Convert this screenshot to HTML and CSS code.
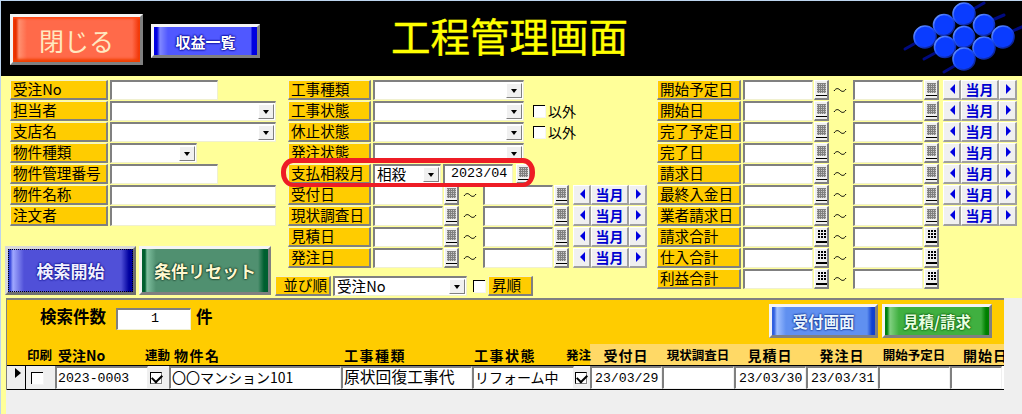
FILE: index.html
```html
<!DOCTYPE html>
<html lang="ja">
  <head>
    <meta charset="UTF-8" />
    <title>工程管理画面</title>
    <link rel="stylesheet" href="styles.css">
  </head>

  <body>
    <svg class="defs" width="0" height="0">
      <defs>
        <linearGradient id="rim" x1="0.15" y1="0.1" x2="0.85" y2="0.9">
          <stop offset="0" stop-color="#5f8cff" />
          <stop offset="0.5" stop-color="#1a4cf5" />
          <stop offset="1" stop-color="#0a1f90" />
        </linearGradient>
        <symbol id="cal" viewBox="0 0 11 15">
          <path d="M1 1h9v10H1z" fill="#c8c8c8" />
          <path d="M1 1.5h9M1 3.5h9M1 5.5h9M1 7.5h9M1 9.5h9M2.5 1v10M4.5 1v10M6.5 1v10M8.5 1v10" stroke="#808080" stroke-width="1" />
          <path d="M0 13.5h11" stroke="#000" stroke-width="1" />
        </symbol>
        <symbol id="calc" viewBox="0 0 11 15">
          <path d="M2 1h2v2H2zM5 1h2v2H5zM8 1h2v2H8zM2 4h2v2H2zM5 4h2v2H5zM8 4h2v2H8zM2 7h2v2H2zM5 7h2v2H5zM8 7h2v2H8z" fill="#000" />
          <path d="M0 12h11v2H0z" fill="#000" />
        </symbol>
        <symbol id="wave" viewBox="0 0 14 6">
          <path d="M1 4 C3 1 5 1 7 3 S11 5 13 2" fill="none" stroke="#000" stroke-width="1" />
        </symbol>
      </defs>
    </svg>

    <header class="top-bar">
      <button class="img-btn btn-close">閉じる</button>
      <button class="img-btn btn-profit">収益一覧</button>
      <h1 class="title">工程管理画面</h1>
      <svg class="logo" width="122" height="75" viewBox="0 0 122 75">
        <g stroke="#000a80" stroke-width="3" stroke-linecap="round">
          <path d="M5 48 L30 34 M24 58 L50 44 M44 71 L70 56" />
          <path d="M70 10 L84 2 M90 20 L104 14 M108 32 L124 25" />
        </g>
        <g fill="#0a3cff" stroke="url(#rim)" stroke-width="1.6">
          <circle cx="44" cy="24" r="10.5" />
          <circle cx="84" cy="24" r="10.5" />
          <circle cx="64" cy="13" r="11" />
          <circle cx="25" cy="36" r="11" />
          <circle cx="64" cy="36" r="10.5" />
          <circle cx="103" cy="36" r="11" />
          <circle cx="45" cy="46" r="10.5" />
          <circle cx="84" cy="47" r="11" />
          <circle cx="64" cy="58" r="11" />
        </g>
      </svg>
    </header>

    <section class="search">
      <div class="col col-left">
        <div class="row"><span class="lbl">受注No</span><span class="inp w108"></span></div>
        <div class="row"><span class="lbl">担当者</span><span class="inp w166"><i class="drop"></i></span></div>
        <div class="row"><span class="lbl">支店名</span><span class="inp w166"><i class="drop"></i></span></div>
        <div class="row"><span class="lbl">物件種類</span><span class="inp w87"><i class="drop"></i></span></div>
        <div class="row"><span class="lbl">物件管理番号</span><span class="inp w108"></span></div>
        <div class="row"><span class="lbl">物件名称</span><span class="inp w166"></span></div>
        <div class="row"><span class="lbl">注文者</span><span class="inp w166"></span></div>
        <div class="search-btns">
          <button class="img-btn btn-search">検索開始</button>
          <button class="img-btn btn-reset">条件リセット</button>
        </div>
      </div>

      <div class="col col-mid">
        <div class="row"><span class="lbl">工事種類</span><span class="inp w151"><i class="drop"></i></span></div>
        <div class="row"><span class="lbl">工事状態</span><span class="inp w151"><i class="drop"></i></span><i class="chk"></i><span class="txt">以外</span></div>
        <div class="row"><span class="lbl">休止状態</span><span class="inp w151"><i class="drop"></i></span><i class="chk"></i><span class="txt">以外</span></div>
        <div class="row"><span class="lbl">発注状態</span><span class="inp w151"><i class="drop"></i></span></div>
        <div class="row"><span class="lbl">支払相殺月</span><span class="inp w68">相殺<i class="drop"></i></span><span class="inp w70 val">2023/04</span><span class="cal cal-gap"><svg width="11" height="15"><use href="#cal" /></svg></span></div>
        <div class="row"><span class="lbl">受付日</span><span class="inp w70"></span><span class="cal"><svg width="11" height="15"><use href="#cal" /></svg></span><svg class="wave" width="14" height="6"><use href="#wave" /></svg><span class="inp w70"></span><span class="cal"><svg width="11" height="15"><use href="#cal" /></svg></span><span class="nav"><b class="prev"></b><em>当月</em><b class="next"></b></span></div>
        <div class="row"><span class="lbl">現状調査日</span><span class="inp w70"></span><span class="cal"><svg width="11" height="15"><use href="#cal" /></svg></span><svg class="wave" width="14" height="6"><use href="#wave" /></svg><span class="inp w70"></span><span class="cal"><svg width="11" height="15"><use href="#cal" /></svg></span><span class="nav"><b class="prev"></b><em>当月</em><b class="next"></b></span></div>
        <div class="row"><span class="lbl">見積日</span><span class="inp w70"></span><span class="cal"><svg width="11" height="15"><use href="#cal" /></svg></span><svg class="wave" width="14" height="6"><use href="#wave" /></svg><span class="inp w70"></span><span class="cal"><svg width="11" height="15"><use href="#cal" /></svg></span><span class="nav"><b class="prev"></b><em>当月</em><b class="next"></b></span></div>
        <div class="row"><span class="lbl">発注日</span><span class="inp w70"></span><span class="cal"><svg width="11" height="15"><use href="#cal" /></svg></span><svg class="wave" width="14" height="6"><use href="#wave" /></svg><span class="inp w70"></span><span class="cal"><svg width="11" height="15"><use href="#cal" /></svg></span><span class="nav"><b class="prev"></b><em>当月</em><b class="next"></b></span></div>
        <div class="row row-sort">
          <span class="lbl lbl-sort">並び順</span><span class="inp w134">受注No<i class="drop"></i></span><i class="chk"></i><span class="lbl lbl-asc">昇順</span>
        </div>
        <div class="highlight"></div>
      </div>

      <div class="col col-right">
        <div class="row"><span class="lbl">開始予定日</span><span class="inp w70"></span><span class="cal"><svg width="11" height="15"><use href="#cal" /></svg></span><svg class="wave" width="14" height="6"><use href="#wave" /></svg><span class="inp w70"></span><span class="cal"><svg width="11" height="15"><use href="#cal" /></svg></span><span class="nav"><b class="prev"></b><em>当月</em><b class="next"></b></span></div>
        <div class="row"><span class="lbl">開始日</span><span class="inp w70"></span><span class="cal"><svg width="11" height="15"><use href="#cal" /></svg></span><svg class="wave" width="14" height="6"><use href="#wave" /></svg><span class="inp w70"></span><span class="cal"><svg width="11" height="15"><use href="#cal" /></svg></span><span class="nav"><b class="prev"></b><em>当月</em><b class="next"></b></span></div>
        <div class="row"><span class="lbl">完了予定日</span><span class="inp w70"></span><span class="cal"><svg width="11" height="15"><use href="#cal" /></svg></span><svg class="wave" width="14" height="6"><use href="#wave" /></svg><span class="inp w70"></span><span class="cal"><svg width="11" height="15"><use href="#cal" /></svg></span><span class="nav"><b class="prev"></b><em>当月</em><b class="next"></b></span></div>
        <div class="row"><span class="lbl">完了日</span><span class="inp w70"></span><span class="cal"><svg width="11" height="15"><use href="#cal" /></svg></span><svg class="wave" width="14" height="6"><use href="#wave" /></svg><span class="inp w70"></span><span class="cal"><svg width="11" height="15"><use href="#cal" /></svg></span><span class="nav"><b class="prev"></b><em>当月</em><b class="next"></b></span></div>
        <div class="row"><span class="lbl">請求日</span><span class="inp w70"></span><span class="cal"><svg width="11" height="15"><use href="#cal" /></svg></span><svg class="wave" width="14" height="6"><use href="#wave" /></svg><span class="inp w70"></span><span class="cal"><svg width="11" height="15"><use href="#cal" /></svg></span><span class="nav"><b class="prev"></b><em>当月</em><b class="next"></b></span></div>
        <div class="row"><span class="lbl">最終入金日</span><span class="inp w70"></span><span class="cal"><svg width="11" height="15"><use href="#cal" /></svg></span><svg class="wave" width="14" height="6"><use href="#wave" /></svg><span class="inp w70"></span><span class="cal"><svg width="11" height="15"><use href="#cal" /></svg></span><span class="nav"><b class="prev"></b><em>当月</em><b class="next"></b></span></div>
        <div class="row"><span class="lbl">業者請求日</span><span class="inp w70"></span><span class="cal"><svg width="11" height="15"><use href="#cal" /></svg></span><svg class="wave" width="14" height="6"><use href="#wave" /></svg><span class="inp w70"></span><span class="cal"><svg width="11" height="15"><use href="#cal" /></svg></span><span class="nav"><b class="prev"></b><em>当月</em><b class="next"></b></span></div>
        <div class="row"><span class="lbl">請求合計</span><span class="inp w70"></span><span class="cal"><svg width="11" height="15"><use href="#calc" /></svg></span><svg class="wave" width="14" height="6"><use href="#wave" /></svg><span class="inp w70"></span><span class="cal"><svg width="11" height="15"><use href="#calc" /></svg></span></div>
        <div class="row"><span class="lbl">仕入合計</span><span class="inp w70"></span><span class="cal"><svg width="11" height="15"><use href="#calc" /></svg></span><svg class="wave" width="14" height="6"><use href="#wave" /></svg><span class="inp w70"></span><span class="cal"><svg width="11" height="15"><use href="#calc" /></svg></span></div>
        <div class="row"><span class="lbl">利益合計</span><span class="inp w70"></span><span class="cal"><svg width="11" height="15"><use href="#calc" /></svg></span><svg class="wave" width="14" height="6"><use href="#wave" /></svg><span class="inp w70"></span><span class="cal"><svg width="11" height="15"><use href="#calc" /></svg></span></div>
      </div>
    </section>

    <section class="results">
      <div class="results-main">
        <div class="summary">
          <span class="count-lbl">検索件数</span><span class="inp count">1</span><span class="count-lbl">件</span>
          <span class="summary-btns">
            <button class="img-btn btn-recv">受付画面</button>
            <button class="img-btn btn-quote">見積/請求</button>
          </span>
        </div>

        <div class="list-head">
          <span class="h h-print">印刷</span>
          <span class="h h-no">受注No</span>
          <span class="h h-link">連動</span>
          <span class="h h-name">物件名</span>
          <span class="h h-type">工事種類</span>
          <span class="h h-state">工事状態</span>
          <span class="h h-order">発注</span>
          <div class="head-light">
            <span class="h hd hd-big">受付日</span>
            <span class="h hd">現状調査日</span>
            <span class="h hd hd-big">見積日</span>
            <span class="h hd hd-big">発注日</span>
            <span class="h hd">開始予定日</span>
            <span class="h hd hd-last hd-big">開始日</span>
          </div>
        </div>

        <div class="list-row">
          <span class="selector"></span>
          <span class="cell-chk"><i class="chk"></i></span>
          <span class="cell c-no">2023-0003</span>
          <span class="cell-chk c-link"><i class="chk on"></i></span>
          <span class="cell c-name">〇〇マンション101</span>
          <span class="cell c-type">原状回復工事代</span>
          <span class="cell c-state">リフォーム中</span>
          <span class="cell-chk c-order"><i class="chk on"></i></span>
          <span class="cell c-date">23/03/29</span>
          <span class="cell c-date"></span>
          <span class="cell c-date">23/03/30</span>
          <span class="cell c-date">23/03/31</span>
          <span class="cell c-date"></span>
          <span class="cell c-end"></span>
        </div>
      </div>
    </section>
  </body>
</html>
```

FILE: styles.css
```css
* {
  box-sizing: border-box;
}

html,
body {
  height: 100%;
}

body {
  margin: 0;
  padding: 1px 0 0 1px;
  background-color: #bcd4ee;
  font-family: "Noto Sans CJK JP", "Liberation Sans", sans-serif;
  color: #000;
  overflow: hidden;
  display: flex;
  flex-direction: column;
}

.defs {
  position: absolute;
}

/* header */
.top-bar {
  height: 75px;
  background-color: #000;
  display: flex;
  align-items: flex-start;
  flex-shrink: 0;
  overflow: hidden;
}

.title {
  margin: 9px 0 0 131px;
  font-size: 39.5px;
  line-height: 50px;
  font-weight: 400;
  color: #ffff00;
  -webkit-text-stroke: 0.4px #ffff00;
  white-space: nowrap;
}

.logo {
  margin-left: auto;
  flex-shrink: 0;
}

.img-btn {
  font-family: inherit;
  padding: 0;
  cursor: pointer;
  border: 3px solid;
  border-color: #f4f4f4 #808080 #808080 #f4f4f4;
}

.btn-close {
  margin: 13px 0 0 9px;
  width: 133px;
  height: 51px;
  background: linear-gradient(90deg, #e83000 0 3px, #ff9070 6px, #ff6a4a 14px, #ff6a4a calc(100% - 8px), #f03000 100%);
  box-shadow: inset 0 2px 2px #ff4a18, inset 0 -3px 3px #f04000;
  color: #ffe8c0;
  font-size: 25px;
}

.btn-profit {
  margin: 23px 0 0 8px;
  width: 109px;
  height: 34px;
  background: linear-gradient(90deg, #0000e0 0 3px, #8088ff 6px, #5058ff 14px, #5058ff calc(100% - 6px), #0000e0 calc(100% - 5px));
  color: #fff;
  font-size: 15px;
  font-weight: 700;
  text-shadow: 0 0 2px #000090, 0 0 2px #000090, 0 0 2px #000090;
}

/* search form */
.search {
  height: 222px;
  background-color: #ffff99;
  display: flex;
  flex-shrink: 0;
  padding: 4px 0 0 9px;
}

.col {
  display: flex;
  flex-direction: column;
  gap: 1px;
}

.col-left {
  width: 278px;
}

.col-mid {
  width: 369px;
  position: relative;
}

.row {
  display: flex;
  align-items: center;
  height: 20px;
}

.lbl {
  height: 20px;
  width: 98px;
  margin-right: 2px;
  padding-left: 2px;
  flex-shrink: 0;
  background-color: #ffcc00;
  border: 2px solid;
  border-color: #f4f4c8 #808080 #808080 #f4f4c8;
  border-width: 1px 2px 2px 1px;
  font-size: 14.6px;
  line-height: 16px;
  white-space: nowrap;
}

.col-mid .lbl {
  width: 83px;
}

.col-right .lbl {
  width: 84px;
  margin-right: 2px;
}

.inp {
  position: relative;
  display: block;
  height: 20px;
  flex-shrink: 0;
  background-color: #fff;
  border: 2px solid;
  border-color: #808080 #f0f0d0 #f0f0d0 #808080;
  border-width: 2px 1px 1px 2px;
  font-size: 14.6px;
  line-height: 15px;
  padding-left: 2px;
  white-space: nowrap;
}

.w68 { width: 68px; }
.w70 { width: 70px; }
.w87 { width: 87px; }
.w108 { width: 108px; }
.w134 { width: 134px; }
.w151 { width: 151px; }
.w166 { width: 166px; }

.val {
  margin-left: 2px;
  padding-left: 6px;
  font-family: "Liberation Mono", monospace;
  font-size: 13.4px;
  line-height: 16px;
}

.drop {
  position: absolute;
  right: 1px;
  top: 1px;
  width: 16px;
  height: 15px;
  background-color: #f0f0f0;
  border: 1px solid;
  border-color: #fff #808080 #808080 #fff;
}

.drop::after {
  content: "";
  position: absolute;
  left: 4px;
  top: 5px;
  border: 3px solid transparent;
  border-top: 4px solid #000;
  border-bottom: 0;
}

.chk {
  display: block;
  position: relative;
  width: 12px;
  height: 12px;
  flex-shrink: 0;
  background-color: #fff;
  border-left: 1px solid #000;
  border-top: 1px solid #000;
  box-shadow: 1px 1px 0 #f4f4f4;
}

.chk.on {
  border: 1px solid #808080;
  border-left-color: #000;
  border-top-color: #000;
}

.chk.on::after {
  content: "";
  position: absolute;
  left: 1px;
  top: 1px;
  width: 8px;
  height: 5px;
  border-left: 2px solid #000;
  border-bottom: 2px solid #000;
  transform: rotate(-45deg);
}

.col-mid > .row > .chk {
  margin-left: 9px;
}

.txt {
  margin-left: 3px;
  font-size: 14px;
}

.cal {
  width: 15px;
  height: 20px;
  margin-left: 1px;
  flex-shrink: 0;
  background-color: #f0f0f0;
  border: 1px solid;
  border-color: #fff #808080 #808080 #fff;
  border-width: 1px 2px 2px 1px;
  padding-top: 1px;
  display: flex;
  justify-content: center;
}

.cal-gap {
  margin-left: 3px;
}

.wave {
  margin: 0 6px 0 4px;
  flex-shrink: 0;
}

.nav {
  display: flex;
  height: 20px;
  margin-left: 4px;
  flex-shrink: 0;
}

.nav b,
.nav em {
  display: block;
  position: relative;
  height: 20px;
  background-color: #f0f0f0;
  border: 1px solid;
  border-color: #fff #a0a0a0 #a0a0a0 #fff;
  border-width: 1px 2px 2px 1px;
  color: #0000d0;
  font-style: normal;
  text-align: center;
}

.nav b {
  width: 18px;
}

.nav b::after {
  content: "";
  position: absolute;
  left: 6px;
  top: 3px;
  border: 5px solid transparent;
  border-left: 0;
  border-right: 5px solid #0000e0;
}

.nav b.next::after {
  border-left: 5px solid #0000e0;
  border-right: 0;
}

.nav em {
  width: 38px;
  font-size: 14px;
  line-height: 16px;
  font-weight: 700;
}

.row-sort {
  margin: 7px 0 0 -13px;
}

.lbl.lbl-sort {
  width: 56px;
  margin-right: 2px;
  text-align: right;
  padding: 0 2px 0 0;
}

.col-mid > .row-sort > .chk {
  margin-left: 6px;
}

.lbl.lbl-asc {
  width: 45px;
  margin: 0 0 0 3px;
  padding-left: 3px;
}

.highlight {
  position: absolute;
  left: -7px;
  top: 78px;
  width: 254px;
  height: 29px;
  border: 5px solid #ee1c25;
  border-width: 5px 5px 4px 5px;
  border-radius: 12px / 14px;
}

.search-btns {
  display: flex;
  gap: 3px;
  margin: 19px 0 0 -5px;
}

.btn-search {
  width: 131px;
  height: 49px;
  background: linear-gradient(90deg, #3040d8 0 2px, #a0a8ff 5px, #5050d8 16px, #5050d8 calc(100% - 12px), #0000a0 calc(100% - 4px));
  border-color: #d8d8d8 #707070 #707070 #d8d8d8;
  color: #f0f0ff;
  font-size: 17px;
  font-weight: 700;
  outline: 1px dotted #000;
  outline-offset: -4px;
  text-shadow: 0 0 2px #000080, 0 0 2px #000080;
}

.btn-reset {
  width: 132px;
  height: 49px;
  background: linear-gradient(90deg, #006030 0 3px, #80c0a0 5px, #509070 14px, #509070 calc(100% - 10px), #006030 calc(100% - 4px));
  color: #fff8d0;
  font-size: 17px;
  font-weight: 700;
  text-shadow: 0 0 2px #002010, 0 0 2px #002010;
}

/* results list */
.results {
  flex: 1;
  background: linear-gradient(90deg, #ffff99 0 5px, #efefef 5px);
  padding-left: 5px;
  min-height: 0;
}

.results-main {
  width: 998px;
  border-top: 2px solid #808080;
  border-left: 1px solid #808080;
}

.summary {
  height: 45px;
  background-color: #ffcc00;
  display: flex;
  align-items: flex-start;
}

.count-lbl {
  font-size: 16.5px;
  font-weight: 700;
  line-height: 20px;
  margin: 6px 0 0 33px;
}

.count-lbl + .inp + .count-lbl {
  margin-left: 5px;
}

.inp.count {
  width: 75px;
  height: 22px;
  margin: 8px 0 0 10px;
  text-align: center;
  font-family: "Liberation Mono", monospace;
  font-size: 13.4px;
  line-height: 18px;
}

.summary-btns {
  display: flex;
  gap: 4px;
  margin: 4px 0 0 auto;
  padding-right: 12px;
}

.btn-recv {
  width: 109px;
  height: 34px;
  background: linear-gradient(90deg, #3060e0 0 2px, #a0c0ff 5px, #6090f0 14px, #6090f0 calc(100% - 8px), #1040d0 calc(100% - 3px));
  color: #e8f4ff;
  font-size: 15.5px;
  font-weight: 700;
  text-shadow: 0 0 2px #002080, 0 0 2px #002080;
}

.btn-quote {
  width: 110px;
  height: 34px;
  background: linear-gradient(90deg, #008010 0 2px, #80d080 5px, #40b040 14px, #40b040 calc(100% - 8px), #008000 calc(100% - 3px));
  color: #e8ffe0;
  font-size: 15.5px;
  font-weight: 700;
  text-shadow: 0 0 2px #005000, 0 0 2px #005000;
}

.list-head {
  height: 21px;
  background-color: #ffcc00;
  display: flex;
  align-items: center;
  border-bottom: 1px solid #000;
}

.h {
  display: block;
  flex-shrink: 0;
  font-size: 12.5px;
  font-weight: 700;
  line-height: 18px;
  white-space: nowrap;
}

.h-print { margin-left: 20px; width: 31px; }
.h-no { width: 87px; font-size: 14px; }
.h-link { width: 29px; }
.h-name { width: 170px; font-size: 14px; letter-spacing: 1.5px; }
.h-type { width: 130px; font-size: 14px; letter-spacing: 1.5px; }
.h-state { width: 92px; font-size: 14px; letter-spacing: 1.5px; }
.h-order { width: 24px; position: relative; z-index: 1; }

.head-light {
  margin-left: auto;
  align-self: flex-end;
  width: 414px;
  height: 21px;
  background-color: #ffd966;
  display: flex;
  align-items: center;
  overflow: hidden;
}

.hd {
  width: 72px;
  text-align: center;
}

.hd-big {
  font-size: 14px;
  letter-spacing: 1px;
}

.hd-last {
  width: 54px;
  text-align: left;
  padding-left: 13px;
}

.list-row {
  height: 24px;
  background-color: #fff;
  display: flex;
  border-bottom: 1px solid #000;
}

.selector {
  width: 19px;
  background-color: #efefef;
  border-right: 1px solid #000;
  position: relative;
}

.selector::after {
  content: "";
  position: absolute;
  left: 8px;
  top: 2px;
  border: 5px solid transparent;
  border-left: 6px solid #000;
  border-right: 0;
}

.cell-chk {
  width: 29px;
  background-color: #efefef;
  display: flex;
  padding: 6px 0 0 5px;
  flex-shrink: 0;
}

.cell {
  height: 23px;
  background-color: #fff;
  border: 2px solid;
  border-color: #808080 #f0f0f0 #f0f0f0 #808080;
  border-width: 2px 1px 1px 2px;
  font-size: 14px;
  line-height: 18px;
  padding-left: 1px;
  white-space: nowrap;
  flex-shrink: 0;
}

.c-no { width: 93px; font-size: 13.2px; line-height: 21px; font-family: "Liberation Mono", monospace; }
.cell-chk.c-link { width: 21px; padding-left: 2px; }
.c-name { width: 172px; }
.c-type { width: 131px; font-size: 15.8px; }
.c-state { width: 102px; }
.cell-chk.c-order { width: 16px; padding-left: 1px; }
.c-date { width: 72px; font-size: 13.2px; line-height: 21px; font-family: "Liberation Mono", monospace; padding-left: 3px; }
.c-end { width: 52px; }
```
